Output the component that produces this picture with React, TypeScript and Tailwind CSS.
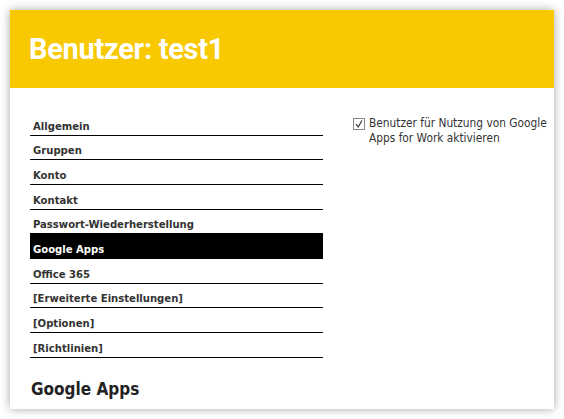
import React from "react";

const items = [
  "Allgemein",
  "Gruppen",
  "Konto",
  "Kontakt",
  "Passwort-Wiederherstellung",
  "Google Apps",
  "Office 365",
  "[Erweiterte Einstellungen]",
  "[Optionen]",
  "[Richtlinien]",
];

export default function App() {
  return (
    <div className="w-[564px] h-[419px] bg-white p-[10px] overflow-hidden">
      <div className="w-[544px] h-[399px] bg-white shadow-[0_0_9px_rgba(0,0,0,0.35)] flex flex-col">
        <div className="h-[78px] bg-[#f8c800] flex items-center pl-[19px] pt-[1px]">
          <h1 className="font-['Roboto',sans-serif] font-bold text-[29px] leading-none text-white tracking-[-0.3px]">
            Benutzer: test1
          </h1>
        </div>
        <div className="flex pl-[20px] pt-[23px] font-['DejaVu_Sans_Condensed','DejaVu_Sans',sans-serif] font-stretch-condensed text-[#333]">
          <div className="w-[293px] shrink-0 flex flex-col">
            <ul className="flex flex-col">
              {items.map((it) => {
                const active = it === "Google Apps";
                return (
                  <li
                    key={it}
                    className={
                      "h-[24.67px] border-b border-black flex items-end pl-[3px] pb-[2px] text-[11.2px] leading-[13px] font-bold " +
                      (active ? "bg-black text-white" : "text-[#333]")
                    }
                  >
                    {it}
                  </li>
                );
              })}
            </ul>
            <h2 className="mt-[21px] pl-[1px] text-[17px] leading-[20px] font-bold text-[#222]">
              Google Apps
            </h2>
          </div>
          <div className="ml-[30px] shrink-0 flex items-start pt-[7px]">
            <div className="w-[12px] h-[12px] border border-[#888] bg-white flex items-center justify-center shrink-0">
              <svg width="10" height="10" viewBox="0 0 10 10">
                <path d="M2 5 L4.2 8 L8 1.5" stroke="#333" strokeWidth="1.2" fill="none" />
              </svg>
            </div>
            <label className="ml-[4px] text-[11.8px] leading-[15px] text-[#333] whitespace-nowrap -mt-[2px]">
              Benutzer für Nutzung von Google
              <br />
              Apps for Work aktivieren
            </label>
          </div>
        </div>
      </div>
    </div>
  );
}
